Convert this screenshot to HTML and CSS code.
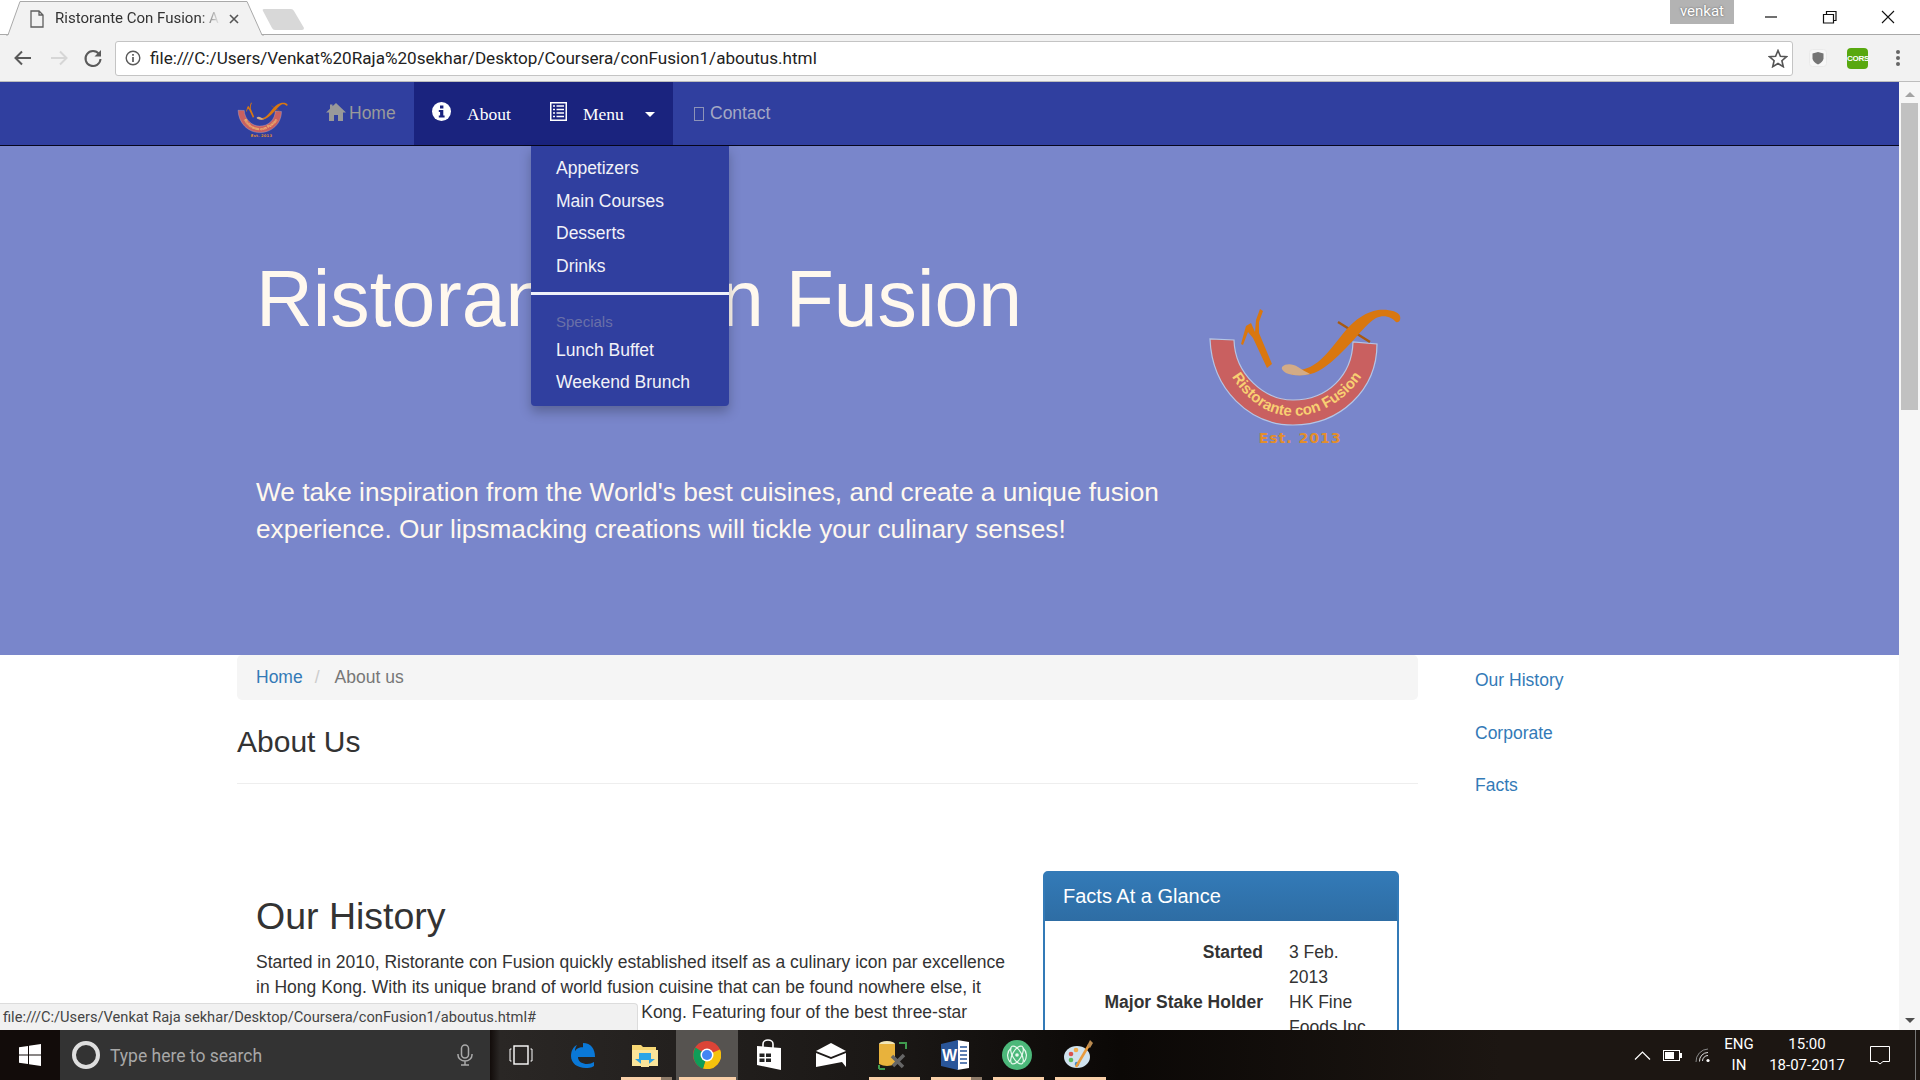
FILE: index.html
```html
<!DOCTYPE html>
<html lang="en">
<head>
<meta charset="utf-8">
<title>Ristorante Con Fusion: About Us</title>
<link rel="stylesheet" href="styles.css">
</head>
<body>
<svg class="defs" width="0" height="0" aria-hidden="true">
  <defs>
    <symbol id="logo" viewBox="26 24 196 145">
      <path d="M30 59C32 110 70 145 113 145C160 145 197 110 197 64L173 62C172 95 148 120 113 120C85 120 55 95 54 60Z" fill="#c96060" stroke="#b4c6e6" stroke-width="1.2"/>
      <path id="logoarc" d="M48 90C64 120 88 136 113 136C140 136 168 120 186 90" fill="none"/>
      <text class="logo-arc-text"><textPath href="#logoarc" startOffset="50%" text-anchor="middle">Ristorante con Fusion</textPath></text>
      <text class="logo-est" x="120" y="163" text-anchor="middle">Est. 2013</text>
      <path d="M61 64L66 46L71 43L75 52L76 40L80 29L83 31L79 42L79 53L92 84L87 88L73 58L68 52L63 65Z" fill="#d9770f"/>
      <path d="M158 42L190 62" stroke="#a85a10" stroke-width="2.4"/>
      <path d="M112 90C122 91 130 88 138 82C148 74 156 62 166 50C176 39 186 32 198 30C208 29 218 31 220 36C221 40 219 43 216 42C212 37 204 34 196 38C186 44 176 58 166 68C156 78 146 88 134 93C126 96 118 95 112 95Z" fill="#d9770f"/>
      <path d="M102 87C106 83 113 84 118 87C122 90 127 92 130 94C124 96 112 96 106 93C103 91 101 89 102 87Z" fill="#d3ab86"/>
    </symbol>
  </defs>
</svg>

<header class="tabstrip">
  <div class="tab">
    <svg class="tab-shape" width="258" height="36" viewBox="0 0 258 36"><path d="M0 35H2L14 1.5H241L256 35H258" fill="#f2f2f2" stroke="#a9a9a9"/></svg>
    <svg class="tab-doc" width="14" height="18" viewBox="0 0 14 18"><path d="M1 1H9L13 5V17H1Z M9 1V5H13" fill="none" stroke="#5f5f5f" stroke-width="1.3"/></svg>
    <span class="tab-title">Ristorante Con Fusion: About Us</span>
    <svg class="tab-x" width="10" height="10" viewBox="0 0 10 10"><path d="M1 1L9 9M9 1L1 9" stroke="#555" stroke-width="1.6"/></svg>
  </div>
  <svg class="newtab" width="44" height="22" viewBox="0 0 44 22"><path d="M2 0H29Q31 0 32 2L42 19Q42 21 40 21H13Q11 21 10 19L1 2Q0 0 2 0Z" fill="#d8d8d8"/></svg>
  <div class="tabstrip-right">
    <span class="user-badge">venkat</span>
    <svg class="winbtn" width="58" height="14" viewBox="0 0 58 14"><path d="M21 7H33" stroke="#111" stroke-width="1.2"/></svg>
    <svg class="winbtn" width="58" height="14" viewBox="0 0 58 14"><path d="M21.5 4.5H31.5V13H21.5Z M24.5 4V1.5H34V10.5H32" fill="none" stroke="#111" stroke-width="1.2"/></svg>
    <svg class="winbtn" width="60" height="14" viewBox="0 0 60 14"><path d="M22 1L34 13M34 1L22 13" stroke="#111" stroke-width="1.1"/></svg>
  </div>
</header>

<div class="toolbar">
  <svg class="tool" width="35" height="20" viewBox="0 0 35 20"><path d="M25 10H10M16 3.5L9.5 10L16 16.5" fill="none" stroke="#5a5a5a" stroke-width="2"/></svg>
  <svg class="tool" width="35" height="20" viewBox="0 0 35 20"><path d="M10 10H25M19 3.5L25.500 10L19 16.5" fill="none" stroke="#d6d6d6" stroke-width="2"/></svg>
  <svg class="tool" width="35" height="20" viewBox="0 0 35 20"><path d="M23 6A7.5 7.5 0 1 0 24.5 11" fill="none" stroke="#5a5a5a" stroke-width="2"/><path d="M25 2V8.5H18.5Z" fill="#5a5a5a"/></svg>
  <div class="omnibox">
    <svg width="16" height="16" viewBox="0 0 16 16"><circle cx="8" cy="8" r="6.8" fill="none" stroke="#5a5a5a" stroke-width="1.4"/><path d="M8 7V12M8 4V5.8" stroke="#5a5a5a" stroke-width="1.7"/></svg>
    <span class="url">file:///C:/Users/Venkat%20Raja%20sekhar/Desktop/Coursera/conFusion1/aboutus.html</span>
    <svg width="20" height="19" viewBox="0 0 20 19"><path d="M10 1.5L12.4 7.2L18.6 7.7L13.9 11.7L15.3 17.7L10 14.5L4.7 17.7L6.1 11.7L1.4 7.7L7.6 7.2Z" fill="none" stroke="#555" stroke-width="1.6"/></svg>
  </div>
  <svg class="ext-shield" width="18" height="18" viewBox="0 0 18 18"><rect x=".5" y=".5" width="17" height="17" rx="3" fill="#f7f7f7" stroke="#eaeaea"/><path d="M3.5 4.5L9 3L14.5 4.5V9.5Q14 13 9 15.5Q4 13 3.5 9.5Z" fill="#757575"/></svg>
  <span class="cors">CORS</span>
  <svg class="menu-dots" width="6" height="18" viewBox="0 0 6 18"><circle cx="3" cy="3" r="2" fill="#666"/><circle cx="3" cy="9" r="2" fill="#666"/><circle cx="3" cy="15" r="2" fill="#666"/></svg>
</div>

<div class="viewport">
  <main class="page">
    <nav class="navbar">
      <svg class="nav-logo" width="51" height="38"><use href="#logo"/></svg>
      <a class="nav-item nav-home" href="#">
        <svg width="20" height="18" viewBox="0 0 20 18"><path d="M10 0L20 9.5H17V18H12V12H8V18H3V9.5H0L4 5.7V1.5H6.5V3.3Z" fill="#999"/></svg>
        Home
      </a>
      <a class="nav-item nav-active nav-about" href="#">
        <svg width="19" height="19" viewBox="0 0 19 19"><circle cx="9.5" cy="9.5" r="9.5" fill="#fff"/><rect x="8" y="3.5" width="3.4" height="3" fill="#1a237e"/><path d="M6.8 8H11.3V13.5H12.6V15.5H6.8V13.5H8.1V10H6.8Z" fill="#1a237e"/></svg>
        About
      </a>
      <div class="nav-menu-wrap">
        <a class="nav-item nav-active nav-menu" href="#">
          <svg width="17" height="19" viewBox="0 0 17 19"><rect width="17" height="19" fill="#fff"/><rect x="1.5" y="1.5" width="14" height="16" fill="#1a237e"/><path d="M3 4H5M6.5 4H14M3 7.5H5M6.5 7.5H14M3 11H5M6.5 11H14M3 14.5H5M6.5 14.5H14" stroke="#fff" stroke-width="1.6"/></svg>
          Menu
          <span class="caret"></span>
        </a>
        <ul class="dropdown">
          <li><a href="#">Appetizers</a></li>
          <li><a href="#">Main Courses</a></li>
          <li><a href="#">Desserts</a></li>
          <li><a href="#">Drinks</a></li>
          <li class="divider"></li>
          <li class="dropdown-header">Specials</li>
          <li><a href="#">Lunch Buffet</a></li>
          <li><a href="#">Weekend Brunch</a></li>
        </ul>
      </div>
      <a class="nav-item nav-contact" href="#"><span class="tofu"></span>Contact</a>
    </nav>

    <section class="hero">
      <div class="hero-copy">
        <h1>Ristorante con Fusion</h1>
        <p>We take inspiration from the World's best cuisines, and create a unique fusion experience. Our lipsmacking creations will tickle your culinary senses!</p>
      </div>
      <svg class="hero-logo" width="196" height="145"><use href="#logo"/></svg>
    </section>

    <div class="content">
      <div class="main-col">
        <ol class="breadcrumb">
          <li><a href="#">Home</a></li>
          <li class="sep">/</li>
          <li>About us</li>
        </ol>
        <h2 class="page-title">About Us</h2>
        <div class="history-row">
          <article class="history">
            <h2>Our History</h2>
            <p>Started in 2010, Ristorante con Fusion quickly established itself as a culinary icon par excellence in Hong Kong. With its unique brand of world fusion cuisine that can be found nowhere else, it enjoys patronage from the A-list clientele in Hong Kong. Featuring four of the best three-star Michelin chefs in the world, you never know what will arrive on your plate the next time you visit us.</p>
          </article>
          <aside class="panel">
            <h3 class="panel-head">Facts At a Glance</h3>
            <dl class="facts">
              <dt>Started</dt><dd>3 Feb. 2013</dd>
              <dt>Major Stake Holder</dt><dd>HK Fine Foods Inc.</dd>
              <dt>Last Year's Turnover</dt><dd>$1,250,375</dd>
            </dl>
          </aside>
        </div>
      </div>
      <ul class="side-nav">
        <li><a href="#">Our History</a></li>
        <li><a href="#">Corporate</a></li>
        <li><a href="#">Facts</a></li>
      </ul>
    </div>
    <div class="status">file:///C:/Users/Venkat Raja sekhar/Desktop/Coursera/conFusion1/aboutus.html#</div>
  </main>
  <div class="scrollbar">
    <span class="arrow-up"></span>
    <span class="thumb"></span>
    <span class="arrow-down"></span>
  </div>
</div>

<footer class="taskbar">
  <div class="start">
    <svg width="22" height="22" viewBox="0 0 22 22"><path d="M0 3.2L9 2V10.5H0ZM10 1.8L22 0V10.5H10ZM0 11.5H9V20L0 18.8ZM10 11.5H22V22L10 20.2Z" fill="#fff"/></svg>
  </div>
  <div class="search">
    <span class="cortana"></span>
    <span class="search-text">Type here to search</span>
    <svg width="16" height="22" viewBox="0 0 16 22"><rect x="4.5" y="1" width="7" height="13" rx="3.5" fill="none" stroke="#aaa" stroke-width="1.5"/><path d="M1 10V11A7 6 0 0 0 15 11V10M8 17V21M4 21H12" fill="none" stroke="#aaa" stroke-width="1.5"/></svg>
  </div>
  <div class="task">
    <svg width="24" height="20" viewBox="0 0 24 20"><rect x="5" y="1" width="14" height="18" fill="none" stroke="#fff" stroke-width="1.4"/><path d="M2.5 4H1V16H2.5M21.5 4H23V16H21.5" fill="none" stroke="#fff"/></svg>
  </div>
  <div class="task">
    <svg width="26" height="28" viewBox="0 0 26 28"><path d="M13 2C21 2 25 8 25 16H8C8 21 13 23 17 23C20 23 22 22 24 21V25C21 27 18 27 16 27C7 27 1 22 1 15C1 10 3 6 7 4C5 7 5 9 5 10C7 7 10 6 13 6C15 6 17 8 17 11H9C10 8 12 7 13 7" fill="#0a78d7"/></svg>
  </div>
  <div class="task task-open">
    <svg width="28" height="26" viewBox="0 0 28 26"><path d="M1 3H10L12 5H25V24H1Z" fill="#f7d774"/><path d="M1 8H27V24H1Z" fill="#fbe59a"/><path d="M8 12H20V18H24L14 26H14L4 18H8Z" fill="#2ca5e8" transform="translate(0 -1)"/><rect x="10" y="18" width="8" height="7" fill="#fbe59a"/></svg>
    <span class="run run-split"></span>
  </div>
  <div class="task task-active">
    <svg width="28" height="28" viewBox="0 0 28 28"><circle cx="14" cy="14" r="14" fill="#db4437"/><path d="M14 14L2.5 6.5A14 14 0 0 0 10 27.4Z" fill="#0f9d58"/><path d="M14 14L27 8.5A14 14 0 0 1 10 27.4Z" fill="#f4c20d"/><path d="M14 14L10 27.4A14 14 0 0 1 2.5 21Z" fill="#0f9d58"/><circle cx="14" cy="14" r="6.5" fill="#fff"/><circle cx="14" cy="14" r="5" fill="#4285f4"/></svg>
    <span class="run"></span>
  </div>
  <div class="task">
    <svg width="26" height="32" viewBox="0 0 26 32"><path d="M1 7L25 9V31L1 26Z" fill="#fff"/><path d="M7 8V5A5 4 0 0 1 17 5V9" fill="none" stroke="#fff" stroke-width="1.6"/><path d="M3.500 14.500H8.500V18H3.500ZM10 14.500H15V18H10ZM3.500 19.500H8.500V23H3.500ZM10 19.500H15V23H10Z" fill="#222"/></svg>
  </div>
  <div class="task">
    <svg width="30" height="24" viewBox="0 0 30 24"><path d="M0 8L15 0L30 8L15 14ZM0 10L15 16L30 10V24L26 19L0 24Z" fill="#fff"/></svg>
  </div>
  <div class="task task-open">
    <svg width="30" height="30" viewBox="0 0 30 30"><ellipse cx="9" cy="4" rx="8" ry="3" fill="#f2e7b8"/><path d="M1 4H17V24Q9 28 1 24Z" fill="#e8b23c"/><path d="M21 3H28V9M1 29V25M1 29H7" fill="none" stroke="#3f9a4e" stroke-width="2"/><path d="M14 16L25 27M26 15L15 26" stroke="#666" stroke-width="3.5"/></svg>
    <span class="run"></span>
  </div>
  <div class="task task-open">
    <svg width="28" height="30" viewBox="0 0 28 30"><path d="M16 0L28 2V28L16 30Z" fill="#fff"/><path d="M0 4L17 0V30L0 26Z" fill="#2a5699"/><path d="M19 7H26M19 11H26M19 15H26M19 19H26M19 23H26" stroke="#2a5699" stroke-width="1.5"/><text class="word-w" x="8.5" y="21" text-anchor="middle">W</text></svg>
    <span class="run run-split"></span>
  </div>
  <div class="task task-open">
    <svg width="30" height="30" viewBox="0 0 30 30"><circle cx="15" cy="15" r="15" fill="#4cb87a"/><g fill="none" stroke="#e8f8ee" stroke-width="1.2"><ellipse cx="15" cy="15" rx="10" ry="4.5" transform="rotate(60 15 15)"/><ellipse cx="15" cy="15" rx="10" ry="4.5" transform="rotate(-60 15 15)"/><path d="M9 8A10 10 0 0 0 8 22M21 8A10 10 0 0 1 22 22"/></g><circle cx="15" cy="15" r="1.8" fill="#e8f8ee"/></svg>
    <span class="run"></span>
  </div>
  <div class="task task-open">
    <svg width="30" height="30" viewBox="0 0 30 30"><ellipse cx="13" cy="17" rx="13" ry="11" fill="#cfe2ee"/><circle cx="7" cy="14" r="2.3" fill="#d9534f"/><circle cx="12" cy="10" r="2.3" fill="#f0ad4e"/><circle cx="7" cy="20" r="2.3" fill="#5cb85c"/><circle cx="13" cy="24" r="2.3" fill="#428bca"/><path d="M12 27L25 5" stroke="#e89a3c" stroke-width="2.5"/><path d="M23 6L26 0L29 3L26 8Z" fill="#b98a50"/></svg>
    <span class="run"></span>
  </div>
  <div class="tray">
    <svg class="tray-chev" width="17" height="9" viewBox="0 0 17 9"><path d="M1 8.5L8.5 1L16 8.5" fill="none" stroke="#fff" stroke-width="1.2"/></svg>
    <svg class="tray-batt" width="19" height="11" viewBox="0 0 19 11"><rect x=".5" y=".5" width="16" height="10" fill="none" stroke="#fff"/><rect x="2" y="2" width="9" height="7" fill="#fff"/><rect x="17" y="3" width="2" height="5" fill="#fff"/></svg>
    <svg class="tray-wifi" width="17" height="15" viewBox="0 0 17 15"><circle cx="13" cy="12.5" r="1.6" fill="#fff"/><path d="M7.5 13A5.5 5.500 0 0 1 13 7.5M4.5 13.5A8.5 8.500 0 0 1 13 4.5" fill="none" stroke="#ddd" stroke-width="1"/><path d="M1 14A12.500 12.500 0 0 1 13 1" fill="none" stroke="#888" stroke-width="1"/></svg>
    <div class="lang"><span>ENG</span><span>IN</span></div>
    <div class="clock"><span>15:00</span><span>18-07-2017</span></div>
    <svg class="tray-note" width="20" height="19" viewBox="0 0 20 19"><path d="M.5.5H19.5V15.5H13L10 18L7 15.5H.5Z" fill="none" stroke="#fff"/></svg>
    <span class="show-desktop"></span>
  </div>
</footer>
</body>
</html>
```
FILE: styles.css
```css
* { box-sizing: border-box; }
html, body { margin: 0; height: 100%; overflow: hidden; }
body {
  width: 1920px;
  height: 1080px;
  display: flex;
  flex-direction: column;
  font-family: "Liberation Sans", Arial, sans-serif;
  font-size: 17.5px;
  line-height: 25px;
  color: #333;
  background: #fff;
}
a { color: #337ab7; text-decoration: none; }
ul, ol { list-style: none; margin: 0; padding: 0; }
.defs { position: absolute; }

/* Browser chrome */
.tabstrip {
  height: 35px;
  flex: none;
  display: flex;
  align-items: flex-start;
  background: linear-gradient(#fff 34px, #a9a9a9 34px);
}
.tab {
  position: relative;
  width: 266px;
  height: 35px;
  padding: 2px 0 0 37px;
  display: flex;
  align-items: center;
  flex: none;
}
.tab-shape { position: absolute; left: 6px; top: 0; }
.tab-doc, .tab-title, .tab-x { position: relative; }
.tab-doc { flex: none; margin-right: 11px; margin-left: -7px; }
.tab-title {
  width: 165px;
  white-space: nowrap;
  overflow: hidden;
  font-family: "Roboto", sans-serif;
  font-size: 15px;
  color: #333;
  -webkit-mask-image: linear-gradient(90deg, #000 88%, transparent);
  mask-image: linear-gradient(90deg, #000 88%, transparent);
}
.tab-x { margin-left: 9px; flex: none; }
.newtab { margin: 9px 0 0 -4px; flex: none; }
.tabstrip-right { margin-left: auto; display: flex; align-items: flex-start; }
.user-badge {
  width: 64px;
  height: 24px;
  margin-right: 10px;
  background: #b3b3b3;
  color: #fff;
  text-align: center;
  font: 15px/22px "Roboto", sans-serif;
  text-shadow: 0 0 2px #555;
}
.winbtn { flex: none; margin-top: 10px; }

.toolbar {
  height: 47px;
  flex: none;
  display: flex;
  align-items: center;
  padding: 0 19px 0 6px;
  background: #f2f2f2;
  border-bottom: 1px solid #bdbdbd;
}
.tool { flex: none; }
.omnibox {
  width: 1679px;
  height: 35px;
  margin-left: 4px;
  padding: 0 4px 0 9px;
  display: flex;
  align-items: center;
  background: #fff;
  border: 1px solid #c4c4c4;
  border-radius: 3px;
}
.url {
  flex: 1;
  margin-left: 9px;
  font-family: "Roboto", sans-serif;
  font-size: 17.13px;
  color: #222;
  white-space: nowrap;
}
.ext-shield { flex: none; margin-left: 16px; }
.cors {
  flex: none;
  width: 21px;
  height: 21px;
  margin-left: 20px;
  border-radius: 4px;
  background: #58a80f;
  color: #fff;
  font: bold 8px/21px "Liberation Sans", sans-serif;
  text-align: center;
  letter-spacing: -.3px;
  overflow: hidden;
}
.menu-dots { flex: none; margin-left: 27px; }

/* Viewport */
.viewport { flex: 1; min-height: 0; display: flex; }
.page { position: relative; width: 1899px; flex: none; overflow: hidden; }
.scrollbar {
  flex: 1;
  display: flex;
  flex-direction: column;
  align-items: center;
  background: #f6f6f6;
}
.arrow-up, .arrow-down { flex: none; width: 0; height: 0; border: 5px solid transparent; }
.arrow-up { border-bottom: 5px solid #a3a3a3; margin-top: 5px; }
.arrow-down { border-top: 5px solid #505050; margin-top: auto; margin-bottom: 2px; }
.thumb { flex: none; width: 17px; height: 307px; margin-top: 6px; background: #c1c1c1; }

/* Navbar */
.navbar {
  height: 64px;
  display: flex;
  padding-left: 237px;
  background: #303f9f;
  border-bottom: 1px solid #06061c;
  position: relative;
  z-index: 2;
}
.nav-logo { flex: none; margin-top: 19px; }
.nav-item {
  height: 63px;
  display: flex;
  align-items: center;
  color: #9a9a9a;
  flex: none;
}
.nav-home { width: 126px; padding-left: 38px; gap: 3px; }
.nav-home svg { margin-top: -3px; flex: none; }
.nav-contact { margin-left: 21px; color: #a4a8c4; }
.tofu { width: 10px; height: 14px; border: 1px solid #8d93b8; margin-right: 6px; }
.nav-active {
  background: #1a237e;
  color: #fff;
  font-family: "Liberation Serif", serif;
  padding-top: 1px;
}
.nav-active svg { flex: none; }
.nav-about { width: 116px; padding-left: 18px; gap: 16px; }
.nav-about svg, .nav-menu svg { margin-top: -6px; }
.nav-menu { width: 143px; padding-left: 20px; gap: 16px; }
.caret { width: 0; height: 0; border: 5px solid transparent; border-top: 5px solid #fff; border-bottom: 0; margin-left: 5px; }
.nav-menu-wrap { position: relative; flex: none; }
.dropdown {
  position: absolute;
  left: 1px;
  top: 64px;
  width: 198px;
  height: 260px;
  padding-top: 7px;
  background: #303f9f;
  border-radius: 0 0 4px 4px;
  box-shadow: 0 6px 12px rgba(0, 0, 0, .25);
}
.dropdown li a {
  display: block;
  height: 32.7px;
  padding: 3px 0 0 25px;
  color: #f2f2f8;
}
.dropdown .divider { height: 3px; margin: 8px 0 14px; background: #eef0fa; }
.dropdown .dropdown-header { height: 26px; padding-left: 25px; font-size: 15px; color: #6a70a8; }

/* Hero */
.hero {
  height: 509px;
  display: flex;
  padding: 0 0 0 256px;
  background: #7986cb;
  color: #fff8ee;
}
.hero-copy { width: 924px; flex: none; }
.hero h1 {
  margin: 110px 0 0;
  font-size: 78.75px;
  line-height: 86px;
  font-weight: 400;
  white-space: nowrap;
}
.hero p { margin: 132px 0 0; font-size: 26.25px; line-height: 37px; }
.hero-logo { flex: none; margin: 158px 0 0 26px; }
.logo-arc-text { font: bold 15px "Liberation Sans", sans-serif; fill: #f8cf72; }
.logo-est { font: bold 14px "DejaVu Sans", sans-serif; letter-spacing: 1px; fill: #e38e2c; }

/* Content */
.content { display: flex; }
.main-col { width: 1181px; margin-left: 237px; flex: none; }
.breadcrumb {
  height: 45px;
  display: flex;
  align-items: center;
  padding-left: 19px;
  background: #f5f5f5;
  border-radius: 5px;
  color: #777;
}
.breadcrumb .sep { color: #ccc; padding: 0 15px 0 12px; }
.page-title {
  margin: 0;
  padding: 21px 0 20px;
  height: 84px;
  border-bottom: 1px solid #eee;
  font-size: 30px;
  line-height: 42px;
  font-weight: 400;
}
.history-row { display: flex; margin-top: 87px; }
.history { width: 750px; margin-left: 19px; flex: none; }
.history h2 { margin: 22px 0 11px; font-size: 37.5px; line-height: 46px; font-weight: 400; }
.history p { margin: 0; color: #333; }
.panel {
  width: 356px;
  margin-left: 37px;
  flex: none;
  border: 2px solid #337ab7;
  border-radius: 5px;
  height: 300px;
}
.panel-head {
  margin: 0;
  height: 48px;
  padding: 11px 18px 9px;
  background: linear-gradient(#337ab7, #2e6da4);
  color: #fff;
  font-size: 20px;
  line-height: 25px;
  font-weight: 400;
}
.facts {
  margin: 19px 0 0;
  display: grid;
  grid-template-columns: 218px 92px;
  column-gap: 26px;
}
.facts dt { text-align: right; font-weight: 700; }
.facts dd { margin: 0; }
.side-nav { margin-left: 57px; padding-top: 13px; }
.side-nav li { height: 52.5px; }
.status {
  position: absolute;
  left: 0;
  bottom: 0;
  width: 638px;
  height: 27px;
  padding-left: 3px;
  background: #f1f1f1;
  border-top: 1px solid #dcdcdc;
  border-right: 1px solid #dcdcdc;
  border-radius: 0 4px 0 0;
  font: 14.67px/26px "Roboto", sans-serif;
  color: #444;
  white-space: nowrap;
}

/* Taskbar */
.taskbar {
  height: 50px;
  flex: none;
  display: flex;
  background: linear-gradient(90deg, #120c0a 0, #120c0a 490px, #2a2725 500px, #1a1715 900px, #0b0806 1120px, #1c1612 1500px);
  color: #fff;
}
.start { width: 60px; flex: none; display: flex; align-items: center; justify-content: center; }
.search {
  width: 430px;
  flex: none;
  display: flex;
  align-items: center;
  padding: 0 17px 0 12px;
  background: #333;
}
.cortana { width: 28px; height: 28px; border: 4px solid #dedede; border-radius: 50%; flex: none; }
.search-text {
  flex: 1;
  margin-left: 10px;
  padding-top: 2px;
  font: 17.5px "Roboto", sans-serif;
  color: #a8a8a8;
}
.task {
  position: relative;
  width: 62px;
  flex: none;
  display: flex;
  align-items: center;
  justify-content: center;
}
.task-active { background: #565350; }
.run {
  position: absolute;
  left: 3px;
  right: 2px;
  bottom: 0;
  height: 3px;
  background: #f8cfa8;
}
.task-open .run { left: 7px; right: 4px; }
.run-split { background: linear-gradient(90deg, #f8cfa8 78%, #8d7a68 78%); }
.word-w { font: bold 16px "Liberation Sans", sans-serif; fill: #fff; }
.tray { flex: 1; display: flex; align-items: center; font-family: "Roboto", sans-serif; font-size: 15px; line-height: 21px; }
.tray-chev { margin-left: 524px; flex: none; }
.tray-batt { margin-left: 12px; flex: none; }
.tray-wifi { margin-left: 13px; flex: none; }
.lang, .clock { display: flex; flex-direction: column; align-items: center; flex: none; }
.lang { width: 40px; margin-left: 7px; }
.clock { width: 90px; margin-left: 3px; }
.tray-note { margin-left: 18px; flex: none; }
.show-desktop { width: 1px; align-self: stretch; background: #777; margin-left: 25px; flex: none; }
```
